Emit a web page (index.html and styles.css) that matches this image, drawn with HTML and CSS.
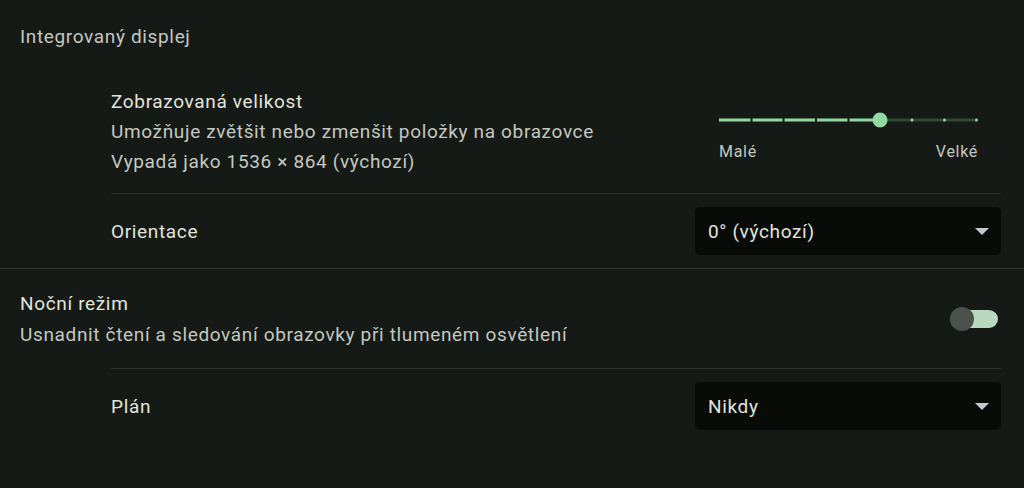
FILE: index.html
```html
<!DOCTYPE html>
<html lang="cs">
<head>
    <meta charset="UTF-8">
    <title>Displej</title>
    <link rel="stylesheet" href="styles.css">
</head>
<body>
    <section class="page">
        <div class="section-title">Integrovaný displej</div>

        <div class="sub-block">
            <div class="row row-size">
                <div class="label">
                    <div class="primary">Zobrazovaná velikost</div>
                    <div class="secondary">Umožňuje zvětšit nebo zmenšit položky na obrazovce</div>
                    <div class="secondary">Vypadá jako 1536 × 864 (výchozí)</div>
                </div>
                <div class="slider">
                    <svg width="260" height="16" viewBox="0 0 260 16">
                        <line x1="1" y1="8" x2="162" y2="8" stroke="#93d8a0" stroke-width="3"/>
                        <line x1="162" y1="8" x2="259" y2="8" stroke="#2d4a33" stroke-width="3"/>
                        <rect x="32.5" y="6" width="2" height="4" fill="#151a16"/>
                        <rect x="64.5" y="6" width="2" height="4" fill="#151a16"/>
                        <rect x="97" y="6" width="2" height="4" fill="#151a16"/>
                        <rect x="129.5" y="6" width="2" height="4" fill="#151a16"/>
                        <circle cx="194" cy="8" r="1.5" fill="#93d8a0"/>
                        <circle cx="226.5" cy="8" r="1.5" fill="#93d8a0"/>
                        <circle cx="258.5" cy="8" r="1.5" fill="#93d8a0"/>
                        <circle cx="162" cy="8" r="7.5" fill="#93d8a0"/>
                    </svg>
                    <div class="slider-labels">
                        <span>Malé</span>
                        <span>Velké</span>
                    </div>
                </div>
            </div>

            <div class="row row-select">
                <div class="primary">Orientace</div>
                <div class="select">
                    <span>0° (výchozí)</span>
                    <span class="caret"></span>
                </div>
            </div>
        </div>

        <div class="row row-night">
            <div class="label">
                <div class="primary">Noční režim</div>
                <div class="secondary">Usnadnit čtení a sledování obrazovky při tlumeném osvětlení</div>
            </div>
            <div class="toggle">
                <span class="toggle-track"></span>
                <span class="toggle-knob"></span>
            </div>
        </div>

        <div class="sub-block">
            <div class="row row-select">
                <div class="primary">Plán</div>
                <div class="select">
                    <span>Nikdy</span>
                    <span class="caret"></span>
                </div>
            </div>
        </div>
    </section>
</body>
</html>
```

FILE: styles.css
```css
* {
    box-sizing: border-box;
    font-family: 'Roboto', 'Liberation Sans', sans-serif;
}

html, body {
    margin: 0;
    height: 100%;
    background-color: #151a16;
}

.page {
    width: 1024px;
    color: #e2e4dd;
    font-size: 19px;
    letter-spacing: 0.65px;
}

.section-title {
    padding: 24px 20px 0;
    height: 68px;
    line-height: 26px;
    color: #c4c8c0;
}

.sub-block {
    padding: 0 23px 0 111px;
}

.sub-block > .row + .row,
.row-night + .sub-block .row {
    border-top: 1px solid #2b312c;
}

.row {
    display: flex;
    flex-direction: row;
    align-items: center;
    justify-content: space-between;
}

.primary {
    color: #e2e4dd;
}

.secondary {
    color: #c4c8c0;
}

.row-size {
    height: 125px;
    padding-top: 3px;
}

.row-size .label {
    line-height: 30px;
}

.slider {
    display: flex;
    flex-direction: column;
    width: 260px;
    margin-right: 23px;
    margin-top: 8px;
}

.slider svg {
    display: block;
}

.slider-labels {
    display: flex;
    justify-content: space-between;
    padding: 0 0 0 1px;
    margin-top: 14px;
    font-size: 16px;
    letter-spacing: 0.7px;
    color: #c4c8c0;
}

.row-select {
    height: 75px;
}

.select {
    width: 306px;
    height: 48px;
    border-radius: 5px;
    background-color: #090b09;
    display: flex;
    align-items: center;
    justify-content: space-between;
    padding: 0 12px 0 13px;
    color: #e2e4dd;
}

.caret {
    width: 0;
    height: 0;
    border-left: 7.5px solid transparent;
    border-right: 7.5px solid transparent;
    border-top: 7px solid #c6c8cf;
    margin-top: 1px;
}

.row-night {
    border-top: 1px solid #2b312c;
    height: 100px;
    padding: 0 26px 0 20px;
}

.row-night .label {
    line-height: 31px;
}

.toggle {
    position: relative;
    width: 48px;
    height: 24px;
}

.toggle-track {
    position: absolute;
    left: 6px;
    right: 0;
    top: 3px;
    height: 18px;
    border-radius: 9px;
    background-color: #b9d8bd;
}

.toggle-knob {
    position: absolute;
    left: 0;
    top: 0;
    width: 24px;
    height: 24px;
    border-radius: 50%;
    background-color: #4a524b;
}
```
